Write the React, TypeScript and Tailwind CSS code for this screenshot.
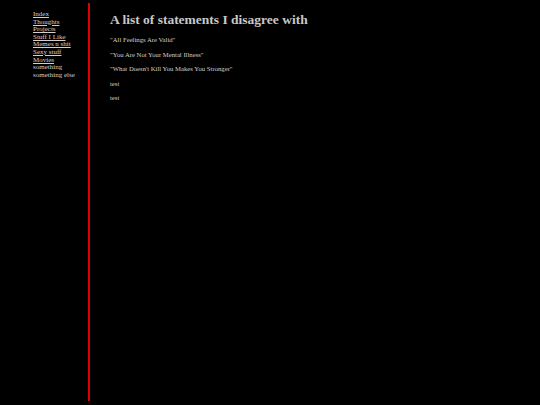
const links = ['Index', 'Thoughts', 'Projects', 'Stuff I Like', 'Memes n shit', 'Sexy stuff', 'Movies']

const statements = [
  '"All Feelings Are Valid"',
  '"You Are Not Your Mental Illness"',
  '"What Doesn\'t Kill You Makes You Stronger"',
  'test',
  'test'
]

function App() {
  return (
    <div className="flex h-[405px] w-[540px] bg-black font-['Liberation_Serif',serif] text-[#d0d0d0]">
      <nav className="mt-[3px] mb-[4px] w-[90px] border-r-2 border-[#e00000] pt-[8px] pl-[33px] text-[7px] leading-[7.6px]">
        {links.map(link => (
          <a key={link} href="#" className="block underline">
            {link}
          </a>
        ))}
        <div>something</div>
        <div>something else</div>
      </nav>
      <main className="pl-[20px] pt-[12px]">
        <h1 className="mb-[8px] text-[13.5px] font-bold leading-[16px] text-[#c8c8c8]">
          A list of statements I disagree with
        </h1>
        <div className="space-y-[7px] text-[6.7px] leading-[7.5px]">
          {statements.map((s, i) => (
            <p key={i}>{s}</p>
          ))}
        </div>
      </main>
    </div>
  )
}

export default App
